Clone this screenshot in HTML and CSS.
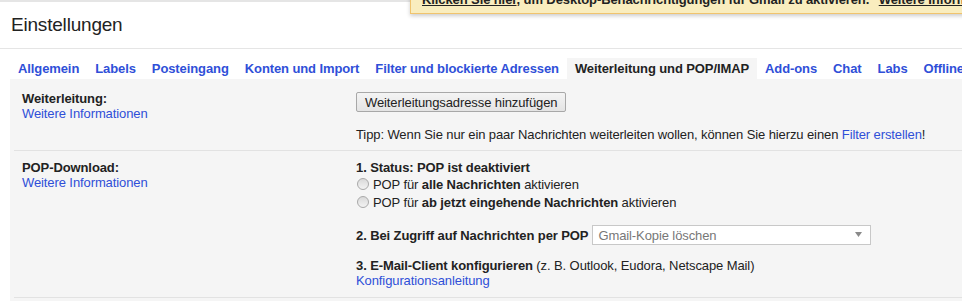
FILE: index.html
```html
<!DOCTYPE html>
<html lang="de">
  <head>
    <meta charset="UTF-8" />
    <meta name="viewport" content="width=device-width, initial-scale=1.0" />
    <title>Einstellungen</title>
    <link rel="stylesheet" href="styles.css">
  </head>
  <body>
    <div class="notice">
      <a href="#">Klicken Sie hier</a>, um Desktop-Benachrichtigungen für Gmail zu aktivieren.
      <a href="#" class="notice-more">Weitere Informationen</a>
    </div>

    <header class="page-head">
      <h1>Einstellungen</h1>
    </header>

    <nav class="tabs">
      <a href="#">Allgemein</a>
      <a href="#">Labels</a>
      <a href="#">Posteingang</a>
      <a href="#">Konten und Import</a>
      <a href="#">Filter und blockierte Adressen</a>
      <a href="#" class="active">Weiterleitung und POP/IMAP</a>
      <a href="#">Add-ons</a>
      <a href="#">Chat</a>
      <a href="#">Labs</a>
      <a href="#">Offline</a>
      <a href="#">Designs</a>
    </nav>

    <div class="panel">
      <div class="setting-row">
        <div class="setting-label">
          <strong>Weiterleitung:</strong>
          <a href="#">Weitere Informationen</a>
        </div>
        <div class="setting-body">
          <button type="button" class="btn">Weiterleitungsadresse hinzufügen</button>
          <p class="tip">Tipp: Wenn Sie nur ein paar Nachrichten weiterleiten wollen, können Sie hierzu einen <a href="#">Filter erstellen</a>!</p>
        </div>
      </div>

      <div class="setting-row">
        <div class="setting-label">
          <strong>POP-Download:</strong>
          <a href="#">Weitere Informationen</a>
        </div>
        <div class="setting-body">
          <div class="step"><strong>1. Status: POP ist deaktiviert</strong></div>
          <label class="radio-line">
            <input type="radio" name="pop" />
            <span>POP für <strong>alle Nachrichten</strong> aktivieren</span>
          </label>
          <label class="radio-line">
            <input type="radio" name="pop" />
            <span>POP für <strong>ab jetzt eingehende Nachrichten</strong> aktivieren</span>
          </label>

          <div class="step step-select">
            <strong>2. Bei Zugriff auf Nachrichten per POP</strong>
            <span class="select-wrap">
              <select disabled>
                <option>Gmail-Kopie löschen</option>
              </select>
              <svg class="select-arrow" width="7" height="5" viewBox="0 0 7 5">
                <path d="M0 0 H7 L3.5 5 Z" fill="#8a8a8a" />
              </svg>
            </span>
          </div>

          <div class="step step-client">
            <strong>3. E-Mail-Client konfigurieren</strong> (z. B. Outlook, Eudora, Netscape Mail)
            <br />
            <a href="#">Konfigurationsanleitung</a>
          </div>
        </div>
      </div>
    </div>
  </body>
</html>
```

FILE: styles.css
```css
html,
body {
  overflow: hidden;
}

body {
  font-family: 'Liberation Sans', Arial, sans-serif;
  font-size: 13px;
  line-height: 15px;
  letter-spacing: -0.1px;
  margin: 0;
  padding: 0;
  color: #222;
  background: #fff;
  position: relative;
}

a {
  color: #2f4fd8;
  text-decoration: none;
}

/* desktop notification bar, hangs over the top edge */
.notice {
  position: absolute;
  top: -15px;
  left: 410px;
  right: -300px;
  padding: 6px 11px;
  background-color: #f9edbe;
  border: 1px solid #f0c36d;
  box-shadow: 0 2px 4px rgba(0, 0, 0, 0.2);
  font-weight: bold;
  white-space: nowrap;
  z-index: 2;
}

.notice a {
  color: #222;
  text-decoration: underline;
}

.notice .notice-more {
  margin-left: 6px;
}

.page-head {
  border-top: 2px solid #e5e5e5;
  border-bottom: 1px solid #e5e5e5;
  padding: 11px 10px 12px 11px;
}

.page-head h1 {
  margin: 0;
  font-size: 19px;
  line-height: 23px;
  letter-spacing: -0.2px;
  font-weight: normal;
  color: #222;
}

.tabs {
  display: flex;
  margin-top: 9px;
  padding-left: 10px;
  white-space: nowrap;
}

.tabs a {
  padding: 3px 8px;
  font-weight: bold;
  flex-shrink: 0;
}

.tabs a.active {
  background-color: #f5f5f5;
  color: #222;
}

.panel {
  margin-left: 10px;
  padding-top: 3px;
  background-color: #f5f5f5;
  min-height: 219px;
}

.setting-row {
  display: grid;
  grid-template-columns: 334px 1fr;
  margin-left: 4px;
  padding: 9px 0 8px 8px;
  border-bottom: 1px solid #e2e2e2;
}

.setting-row + .setting-row {
  padding-bottom: 9px;
}

.setting-label {
  display: flex;
  flex-direction: column;
  align-items: flex-start;
}

.setting-body {
  white-space: nowrap;
}

.btn {
  display: block;
  margin-top: 1px;
  height: 20px;
  padding: 0 8px;
  font-family: inherit;
  font-size: 13px;
  letter-spacing: -0.1px;
  color: #222;
  background: linear-gradient(#f4f4f4, #e4e4e4);
  border: 1px solid #a8a8a8;
  border-radius: 2px;
}

.tip {
  margin: 15px 0 0;
}

.radio-line {
  display: flex;
  align-items: center;
  height: 18px;
}

.radio-line input {
  appearance: none;
  -webkit-appearance: none;
  width: 12px;
  height: 12px;
  margin: 0 4px 0 1px;
  border: 1px solid #a9a9a9;
  border-radius: 50%;
  background: linear-gradient(#d9d9d9, #f3f3f3);
  box-sizing: border-box;
}

.step-select {
  display: flex;
  align-items: center;
  gap: 4px;
  margin-top: 14px;
}

.select-wrap {
  position: relative;
  display: inline-block;
}

.select-wrap select {
  appearance: none;
  -webkit-appearance: none;
  width: 279px;
  height: 20px;
  padding: 0 0 0 5px;
  font-family: inherit;
  font-size: 13px;
  letter-spacing: -0.1px;
  color: #777;
  background-color: #fff;
  border: 1px solid #c8c8c8;
  border-radius: 0;
  opacity: 1;
  display: block;
}

.select-arrow {
  position: absolute;
  right: 9px;
  top: 7px;
}

.step-client {
  margin-top: 13px;
}
```
